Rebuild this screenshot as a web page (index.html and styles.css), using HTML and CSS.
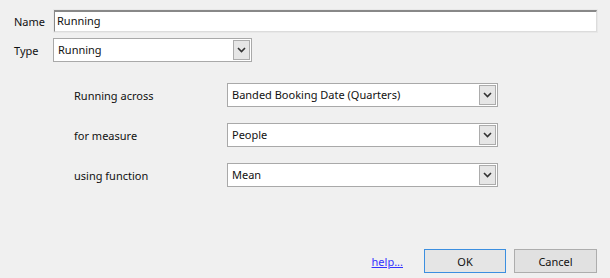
FILE: index.html
```html
<!DOCTYPE html>
<html>
<head>
<meta charset="utf-8">
<link rel="stylesheet" href="styles.css">
</head>
<body>
<div class="dialog">
  <div class="row name-row">
    <label class="lbl">Name</label>
    <div class="textbox">Running</div>
  </div>
  <div class="row type-row">
    <label class="lbl">Type</label>
    <div class="select type-select">
      <span class="val">Running</span>
      <span class="drop"><svg width="9" height="6" viewBox="0 0 9 6"><path d="M1 1 L4.5 4.5 L8 1" fill="none" stroke="#333" stroke-width="1.6"/></svg></span>
    </div>
  </div>
  <div class="params">
    <label class="plbl">Running across</label>
    <div class="select">
      <span class="val">Banded Booking Date (Quarters)</span>
      <span class="drop"><svg width="9" height="6" viewBox="0 0 9 6"><path d="M1 1 L4.5 4.5 L8 1" fill="none" stroke="#333" stroke-width="1.6"/></svg></span>
    </div>
    <label class="plbl">for measure</label>
    <div class="select">
      <span class="val">People</span>
      <span class="drop"><svg width="9" height="6" viewBox="0 0 9 6"><path d="M1 1 L4.5 4.5 L8 1" fill="none" stroke="#333" stroke-width="1.6"/></svg></span>
    </div>
    <label class="plbl">using function</label>
    <div class="select">
      <span class="val">Mean</span>
      <span class="drop"><svg width="9" height="6" viewBox="0 0 9 6"><path d="M1 1 L4.5 4.5 L8 1" fill="none" stroke="#333" stroke-width="1.6"/></svg></span>
    </div>
  </div>
  <div class="footer">
    <a class="help" href="#">help...</a>
    <button class="btn ok">OK</button>
    <button class="btn cancel">Cancel</button>
  </div>
</div>
</body>
</html>
```

FILE: styles.css
```css
html, body {
  margin: 0;
  padding: 0;
  background: #f0f0f0;
}
body {
  font-family: "Noto Sans", "Open Sans", sans-serif;
  font-size: 11px;
  color: #111;
}
.dialog {
  box-sizing: border-box;
  width: 610px;
  height: 278px;
  padding: 10px 13px 5px 14px;
  display: flex;
  flex-direction: column;
}
.row {
  display: flex;
  align-items: center;
}
.lbl {
  width: 39px;
  flex: none;
}
.textbox {
  flex: 1;
  box-sizing: border-box;
  height: 22px;
  background: #fff;
  border-top: 2px solid #888;
  border-left: 1px solid #888;
  border-right: 1px solid #dcdcdc;
  border-bottom: 1px solid #dcdcdc;
  box-shadow: 0 0 0 1px #e8e8e8;
  padding-left: 2px;
  line-height: 18px;
  margin-left: 1px;
}
.type-row {
  margin-top: 6px;
}
.select {
  box-sizing: border-box;
  height: 24px;
  background: #fff;
  border: 1px solid #a9a9a9;
  display: flex;
  align-items: center;
  justify-content: space-between;
  padding: 1px 1px 2px 4px;
}
.type-select {
  width: 199px;
}
.val {
  line-height: 18px;
}
.drop {
  box-sizing: border-box;
  width: 17px;
  height: 20px;
  align-self: flex-start;
  background: #e6e6e6;
  border: 1px solid #acacac;
  display: flex;
  align-items: center;
  justify-content: center;
}
.params {
  margin-top: 21px;
  margin-left: 60px;
  display: grid;
  grid-template-columns: 153px 271px;
  row-gap: 16px;
  align-items: center;
}
.footer {
  margin-top: auto;
  display: flex;
  justify-content: flex-end;
  align-items: center;
  gap: 8px;
}
.help {
  color: #3333ff;
  text-decoration: underline;
  margin-right: 13px;
}
.btn {
  font-family: inherit;
  font-size: 11px;
  color: #111;
  box-sizing: border-box;
  height: 24px;
  padding: 0;
  margin: 0;
}
.ok {
  width: 82px;
  background: #e5e5e5;
  border: 1px solid #3c8fe0;
}
.cancel {
  width: 83px;
  background: #e1e1e1;
  border: 1px solid #adadad;
}
```
